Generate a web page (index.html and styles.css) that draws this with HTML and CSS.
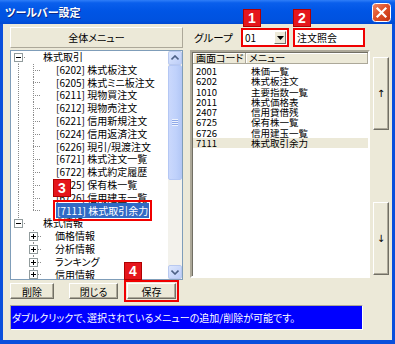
FILE: index.html
```html
<!DOCTYPE html>
<html lang="ja">
<head>
    <meta charset="UTF-8">
    <meta name="viewport" content="width=device-width, initial-scale=1.0">
    <title>ツールバー設定</title>
    <link rel="stylesheet" href="styles.css">
</head>
<body>
    <div class="window">
        <div class="titlebar">
            <span class="title">ツールバー設定</span>
            <span class="close">
                <svg width="19" height="19" viewBox="0 0 19 19">
                    <defs>
                        <linearGradient id="cg" x1="0" y1="0" x2="1" y2="1">
                            <stop offset="0" stop-color="#f08a6a"/>
                            <stop offset="0.45" stop-color="#e0522a"/>
                            <stop offset="1" stop-color="#c2300f"/>
                        </linearGradient>
                    </defs>
                    <rect x="0.5" y="0.5" width="18" height="18" rx="3" fill="url(#cg)" stroke="#ffffff"/>
                    <path d="M5.5 5.5 L13.5 13.5 M13.5 5.5 L5.5 13.5" stroke="#ffffff" stroke-width="2.2" stroke-linecap="square"/>
                </svg>
            </span>
        </div>

        <div class="body">
            <div class="left">
                <div class="panel-head">全体メニュー</div>

                <div class="tree">
                    <div class="tree-items">
                        <div class="node">
                            <span class="g vbot"><span class="box minus"></span></span>
                            <span class="label root">株式取引</span>
                        </div>
                        <div class="node"><span class="g vfull"></span><span class="g vfull tee"></span><span class="label">[6202] 株式板注文</span></div>
                        <div class="node"><span class="g vfull"></span><span class="g vfull tee"></span><span class="label">[6205] 株式ミニ板注文</span></div>
                        <div class="node"><span class="g vfull"></span><span class="g vfull tee"></span><span class="label">[6211] 現物買注文</span></div>
                        <div class="node"><span class="g vfull"></span><span class="g vfull tee"></span><span class="label">[6212] 現物売注文</span></div>
                        <div class="node"><span class="g vfull"></span><span class="g vfull tee"></span><span class="label">[6221] 信用新規注文</span></div>
                        <div class="node"><span class="g vfull"></span><span class="g vfull tee"></span><span class="label">[6224] 信用返済注文</span></div>
                        <div class="node"><span class="g vfull"></span><span class="g vfull tee"></span><span class="label">[6226] 現引/現渡注文</span></div>
                        <div class="node"><span class="g vfull"></span><span class="g vfull tee"></span><span class="label">[6721] 株式注文一覧</span></div>
                        <div class="node"><span class="g vfull"></span><span class="g vfull tee"></span><span class="label">[6722] 株式約定履歴</span></div>
                        <div class="node"><span class="g vfull"></span><span class="g vfull tee"></span><span class="label">[6725] 保有株一覧</span></div>
                        <div class="node"><span class="g vfull"></span><span class="g vfull tee"></span><span class="label">[6726] 信用建玉一覧</span></div>
                        <div class="node">
                            <span class="g vfull"></span><span class="g vtop tee"></span>
                            <span class="label"><span class="picked">[7111] 株式取引余力<span class="marker m3">3</span></span></span>
                        </div>
                        <div class="node">
                            <span class="g vtop"><span class="box minus"></span></span>
                            <span class="label root">株式情報</span>
                        </div>
                        <div class="node"><span class="g"></span><span class="g vfull stub"><span class="box plus"></span></span><span class="label sub">価格情報</span></div>
                        <div class="node"><span class="g"></span><span class="g vfull stub"><span class="box plus"></span></span><span class="label sub">分析情報</span></div>
                        <div class="node"><span class="g"></span><span class="g vfull stub"><span class="box plus"></span></span><span class="label sub">ランキング</span></div>
                        <div class="node"><span class="g"></span><span class="g vfull stub"><span class="box plus"></span></span><span class="label sub">信用情報</span></div>
                    </div>
                    <div class="vscroll">
                        <span class="sbtn">
                            <svg width="8" height="6" viewBox="0 0 8 6"><path d="M0.5 4.5 L4 1 L7.5 4.5" fill="none" stroke="#4d6185" stroke-width="1.6"/></svg>
                        </span>
                        <span class="thumb"><span class="grip"></span></span>
                        <span class="track"></span>
                        <span class="sbtn">
                            <svg width="8" height="6" viewBox="0 0 8 6"><path d="M0.5 1.5 L4 5 L7.5 1.5" fill="none" stroke="#4d6185" stroke-width="1.6"/></svg>
                        </span>
                    </div>
                </div>

                <div class="actions">
                    <button class="btn del">削除</button>
                    <button class="btn shut">閉じる</button>
                    <button class="btn save">保存<span class="marker m4">4</span></button>
                </div>
            </div>

            <div class="right">
                <div class="group-row">
                    <span class="group-label">グループ</span>
                    <span class="combo">
                        <span class="combo-text">01</span>
                        <span class="combo-btn">
                            <svg width="7" height="4" viewBox="0 0 7 4"><path d="M0 0 H7 L3.5 4 Z" fill="#000"/></svg>
                        </span>
                        <span class="marker m1">1</span>
                    </span>
                    <span class="field">注文照会<span class="marker m2">2</span></span>
                </div>

                <div class="list-area">
                    <div class="list">
                        <div class="list-head">
                            <span class="hcell">画面コード</span>
                            <span class="hcell">メニュー</span>
                        </div>
                        <div class="list-rows">
                            <div class="lrow"><span>2001</span><span>株価一覧</span></div>
                            <div class="lrow"><span>6202</span><span>株式板注文</span></div>
                            <div class="lrow"><span>1010</span><span>主要指数一覧</span></div>
                            <div class="lrow"><span>2011</span><span>株式価格表</span></div>
                            <div class="lrow"><span>2407</span><span>信用貸借残</span></div>
                            <div class="lrow"><span>6725</span><span>保有株一覧</span></div>
                            <div class="lrow"><span>6726</span><span>信用建玉一覧</span></div>
                            <div class="lrow current"><span>7111</span><span>株式取引余力</span></div>
                        </div>
                    </div>
                    <div class="side">
                        <button class="sidebtn">↑</button>
                        <button class="sidebtn">↓</button>
                    </div>
                </div>
            </div>

            <div class="hint">ダブルクリックで、選択されているメニューの追加/削除が可能です。</div>
        </div>
    </div>
</body>
</html>
```

FILE: styles.css
```css
* {
    box-sizing: border-box;
}
body {
    margin: 0;
    font-family: "Noto Sans CJK JP", "Noto Sans", sans-serif;
    font-size: 10px;
    font-feature-settings: "palt";
    color: #000;
}
.window {
    width: 395px;
    height: 344px;
    display: flex;
    flex-direction: column;
    background: #0a4fdc;
    padding: 0 3px 4px 3px;
}
.titlebar {
    height: 24px;
    margin: 0 -3px;
    padding: 0 4px 0 5px;
    display: flex;
    align-items: center;
    background: linear-gradient(#2f7ef8 0%, #0a5fec 12%, #0055e5 45%, #0052df 85%, #0049d2 100%);
}
.title {
    color: #fff;
    font-size: 11px;
    font-weight: bold;
    text-shadow: 1px 1px 0 #0a2a8a;
}
.close {
    margin-left: auto;
    display: flex;
}
.body {
    flex: 1;
    background: #ece9d8;
    padding: 3px 3px 0 7px;
    display: grid;
    grid-template-columns: 173px 199px;
    grid-template-rows: auto auto;
    column-gap: 7px;
    align-content: start;
}

/* left side */
.left {
    display: flex;
    flex-direction: column;
}
.panel-head {
    height: 21px;
    display: flex;
    align-items: center;
    justify-content: center;
    border: 1px solid;
    border-color: #fff #aca899 #aca899 #fff;
    background: #ece9d8;
}
.tree {
    margin-top: 2px;
    height: 230px;
    border: 1px solid #7f9db9;
    background: #fff;
    display: flex;
    overflow: hidden;
}
.tree-items {
    flex: 1;
    overflow: hidden;
}
.node {
    height: 12.8px;
    display: flex;
    align-items: stretch;
    white-space: nowrap;
}
.g {
    width: 15px;
    flex: none;
    display: flex;
    align-items: center;
    background-repeat: no-repeat;
}
.vfull {
    background-image: repeating-linear-gradient(to bottom, #8a8a8a 0 1px, transparent 1px 2px);
    background-position: 7px 0;
    background-size: 1px 100%;
}
.vtop {
    background-image: repeating-linear-gradient(to bottom, #8a8a8a 0 1px, transparent 1px 2px),
        repeating-linear-gradient(to right, #8a8a8a 0 1px, transparent 1px 2px);
    background-position: 7px 0, 13px 50%;
    background-size: 1px 50%, 8px 1px;
}
.vbot {
    background-image: repeating-linear-gradient(to bottom, #8a8a8a 0 1px, transparent 1px 2px),
        repeating-linear-gradient(to right, #8a8a8a 0 1px, transparent 1px 2px);
    background-position: 7px 100%, 13px 50%;
    background-size: 1px 50%, 8px 1px;
}
.vfull.tee {
    background-image: repeating-linear-gradient(to bottom, #8a8a8a 0 1px, transparent 1px 2px),
        repeating-linear-gradient(to right, #8a8a8a 0 1px, transparent 1px 2px);
    background-position: 7px 0, 7px 50%;
    background-size: 1px 100%, 9px 1px;
}
.vtop.tee {
    background-position: 7px 0, 7px 50%;
    background-size: 1px 50%, 9px 1px;
}
.vfull.stub {
    background-image: repeating-linear-gradient(to bottom, #8a8a8a 0 1px, transparent 1px 2px),
        repeating-linear-gradient(to right, #8a8a8a 0 1px, transparent 1px 2px);
    background-position: 7px 0, 12px 50%;
    background-size: 1px 100%, 5px 1px;
}
.box {
    width: 9px;
    height: 9px;
    margin-left: 3px;
    border: 1px solid #919b9c;
    background-color: #fff;
    background-repeat: no-repeat;
}
.minus {
    background-image: linear-gradient(#000, #000);
    background-position: 1px 3px;
    background-size: 5px 1px;
}
.plus {
    background-image: linear-gradient(#000, #000), linear-gradient(#000, #000);
    background-position: 1px 3px, 3px 1px;
    background-size: 5px 1px, 1px 5px;
}
.label {
    line-height: 12.8px;
    padding-left: 15px;
}
.label.root {
    padding-left: 17px;
}
.label.sub {
    padding-left: 14px;
}
.picked {
    position: relative;
    background: #316ac5;
    color: #fff;
    padding: 0 1px;
    outline: 2px solid #f00000;
    outline-offset: 1px;
}
.vscroll {
    width: 14px;
    flex: none;
    display: flex;
    flex-direction: column;
    background: #f3f2ec;
}
.sbtn {
    height: 14px;
    flex: none;
    display: flex;
    align-items: center;
    justify-content: center;
    border: 1px solid #b9c9ef;
    border-radius: 2px;
    background: linear-gradient(135deg, #dde7fd, #bccdf8);
}
.thumb {
    height: 115px;
    flex: none;
    display: flex;
    align-items: center;
    justify-content: center;
    border: 1px solid #b4c7f4;
    border-radius: 2px;
    background: linear-gradient(90deg, #cad8fc, #bfd1fb 60%, #b4c8f6);
}
.grip {
    width: 6px;
    height: 7px;
    background: repeating-linear-gradient(to bottom, #eef3fe 0 1px, #8fa9e8 1px 2px);
}
.track {
    flex: 1;
}
.actions {
    margin-top: 3px;
    display: flex;
}
.btn {
    height: 16px;
    padding: 0;
    font: inherit;
    font-size: 10px;
    line-height: 13px;
    border: 1px solid;
    border-color: #fff #716f64 #716f64 #fff;
    box-shadow: inset -1px -1px 0 #aca899;
    background: #ece9d8;
    color: #000;
}
.del {
    width: 44px;
}
.shut {
    width: 49px;
    margin-left: 15px;
}
.save {
    position: relative;
    width: 49px;
    margin-left: 9px;
    outline: 2px solid #f00000;
    outline-offset: 1px;
}

/* right side */
.right {
    display: flex;
    flex-direction: column;
}
.group-row {
    margin-top: 1px;
    height: 19px;
    display: flex;
    align-items: center;
}
.group-label {
    width: 51px;
    padding-left: 4px;
    font-size: 10.5px;
}
.combo {
    position: relative;
    width: 48px;
    height: 19px;
    border: 2px solid #f00000;
    background: #fff;
    display: flex;
    align-items: center;
    padding: 0 1px 0 2px;
}
.combo-text {
    flex: 1;
}
.combo-btn {
    width: 12px;
    height: 13px;
    display: flex;
    align-items: center;
    justify-content: center;
    border: 1px solid;
    border-color: #fff #716f64 #716f64 #fff;
    background: #ece9d8;
}
.field {
    position: relative;
    width: 72px;
    height: 19px;
    margin-left: 4px;
    border: 2px solid #f00000;
    background: #fff;
    padding-left: 2px;
    display: flex;
    align-items: center;
}
.marker {
    position: absolute;
    width: 18px;
    height: 18px;
    background: #e5161c;
    border: 1px solid #b00000;
    color: #fff;
    font-family: "Liberation Sans", Arial, sans-serif;
    font-size: 14px;
    font-weight: bold;
    line-height: 16px;
    text-align: center;
}
.m1 {
    left: 0;
    top: -21px;
}
.m2 {
    left: -2px;
    top: -21px;
}
.m3 {
    left: -3px;
    top: -24px;
}
.m4 {
    left: -4px;
    top: -22px;
}
.list-area {
    margin-top: 3px;
    height: 228px;
    display: flex;
}
.list {
    width: 180px;
    border: 2px solid;
    border-color: #aca899 #fff #fff #aca899;
    box-shadow: inset 1px 1px 0 #716f64;
    background: #fff;
}
.list-head {
    height: 11px;
    display: grid;
    grid-template-columns: 53px 1fr;
    margin: 1px 0 0 1px;
}
.hcell {
    background: #ece9d8;
    border-right: 1px solid #aca899;
    border-bottom: 1px solid #aca899;
    box-shadow: inset 1px 1px 0 #fff;
    padding-left: 3px;
    line-height: 10px;
    font-size: 10px;
    white-space: nowrap;
    overflow: hidden;
}
.list-rows {
    padding-top: 2px;
}
.lrow {
    display: grid;
    grid-template-columns: 53px 1fr;
    height: 10.3px;
    line-height: 10.3px;
    font-size: 9.5px;
    margin-left: 1px;
}
.lrow span:first-child {
    padding-left: 3px;
}
.lrow span:last-child {
    padding-left: 5px;
}
.lrow.current {
    background: #ece9d8;
}
.side {
    width: 19px;
    display: flex;
    flex-direction: column;
    justify-content: space-between;
    padding: 7px 0 3px 3px;
}
.sidebtn {
    width: 16px;
    height: 73px;
    padding: 0;
    font-family: "DejaVu Sans", sans-serif;
    font-size: 10px;
    border: 1px solid;
    border-color: #fff #716f64 #716f64 #fff;
    box-shadow: inset -1px -1px 0 #aca899;
    background: #ece9d8;
    color: #000;
}
.hint {
    grid-column: 1 / -1;
    margin-top: 6px;
    width: 353px;
    height: 25px;
    background: #0000ff;
    border: 1px solid;
    border-color: #aca899 #fff #fff #aca899;
    color: #fff;
    line-height: 23px;
    padding-left: 1px;
    white-space: nowrap;
    overflow: hidden;
}
```
